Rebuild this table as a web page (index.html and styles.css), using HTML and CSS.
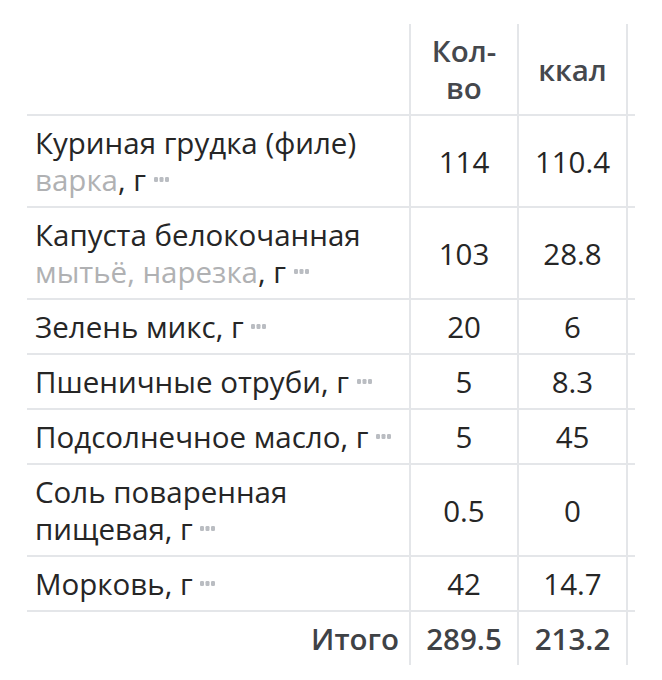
FILE: index.html
```html
<!DOCTYPE html>
<html lang="ru">
<head>
<meta charset="utf-8">
<link rel="stylesheet" href="styles.css">
</head>
<body>
<div class="wrap">
<table class="tbl">
  <colgroup>
    <col class="c-name"><col class="c-num"><col class="c-num2"><col class="c-pad">
  </colgroup>
  <thead>
    <tr>
      <th class="name"></th>
      <th class="num">Кол-<br>во</th>
      <th class="num">ккал</th>
      <th class="pad"></th>
    </tr>
  </thead>
  <tbody>
    <tr>
      <td class="name">Куриная грудка (филе)<br><span class="sub">варка</span>, г <svg class="dots" viewBox="0 0 15 5"><rect x="0" y="0" width="4" height="5" rx="1.2"/><rect x="5.5" y="0" width="4" height="5" rx="1.2"/><rect x="11" y="0" width="4" height="5" rx="1.2"/></svg></td>
      <td class="num">114</td><td class="num">110.4</td><td class="pad"></td>
    </tr>
    <tr>
      <td class="name">Капуста белокочанная<br><span class="sub">мытьё, нарезка</span>, г <svg class="dots" viewBox="0 0 15 5"><rect x="0" y="0" width="4" height="5" rx="1.2"/><rect x="5.5" y="0" width="4" height="5" rx="1.2"/><rect x="11" y="0" width="4" height="5" rx="1.2"/></svg></td>
      <td class="num">103</td><td class="num">28.8</td><td class="pad"></td>
    </tr>
    <tr>
      <td class="name">Зелень микс, г <svg class="dots" viewBox="0 0 15 5"><rect x="0" y="0" width="4" height="5" rx="1.2"/><rect x="5.5" y="0" width="4" height="5" rx="1.2"/><rect x="11" y="0" width="4" height="5" rx="1.2"/></svg></td>
      <td class="num">20</td><td class="num">6</td><td class="pad"></td>
    </tr>
    <tr>
      <td class="name">Пшеничные отруби, г <svg class="dots" viewBox="0 0 15 5"><rect x="0" y="0" width="4" height="5" rx="1.2"/><rect x="5.5" y="0" width="4" height="5" rx="1.2"/><rect x="11" y="0" width="4" height="5" rx="1.2"/></svg></td>
      <td class="num">5</td><td class="num">8.3</td><td class="pad"></td>
    </tr>
    <tr>
      <td class="name">Подсолнечное масло, г <svg class="dots" viewBox="0 0 15 5"><rect x="0" y="0" width="4" height="5" rx="1.2"/><rect x="5.5" y="0" width="4" height="5" rx="1.2"/><rect x="11" y="0" width="4" height="5" rx="1.2"/></svg></td>
      <td class="num">5</td><td class="num">45</td><td class="pad"></td>
    </tr>
    <tr>
      <td class="name">Соль поваренная<br>пищевая, г <svg class="dots" viewBox="0 0 15 5"><rect x="0" y="0" width="4" height="5" rx="1.2"/><rect x="5.5" y="0" width="4" height="5" rx="1.2"/><rect x="11" y="0" width="4" height="5" rx="1.2"/></svg></td>
      <td class="num">0.5</td><td class="num">0</td><td class="pad"></td>
    </tr>
    <tr>
      <td class="name">Морковь, г <svg class="dots" viewBox="0 0 15 5"><rect x="0" y="0" width="4" height="5" rx="1.2"/><rect x="5.5" y="0" width="4" height="5" rx="1.2"/><rect x="11" y="0" width="4" height="5" rx="1.2"/></svg></td>
      <td class="num">42</td><td class="num">14.7</td><td class="pad"></td>
    </tr>
  </tbody>
  <tfoot>
    <tr>
      <td class="name total-label">Итого</td>
      <td class="num">289.5</td><td class="num">213.2</td><td class="pad"></td>
    </tr>
  </tfoot>
</table>
</div>
</body>
</html>
```

FILE: styles.css
```css
html, body {
  margin: 0;
  padding: 0;
  background: #ffffff;
}
.wrap {
  padding: 24px 0 0 27px;
}
.tbl {
  border-collapse: collapse;
  table-layout: fixed;
  width: 608px;
  font-family: "Open Sans", "Noto Sans", sans-serif;
  font-size: 29.5px;
  line-height: 37px;
  color: #262626;
}
.c-name { width: 383px; }
.c-num { width: 108px; }
.c-num2 { width: 109px; }
.c-pad { width: 8px; }
.tbl th, .tbl td {
  padding: 8px 8px 8px 8px;
  vertical-align: middle;
  border-bottom: 2px solid #e4e6e9;
}
.tbl td.name {
  padding-right: 0;
  white-space: nowrap;
}
.tbl th.name, .tbl td.name,
.tbl th.num, .tbl td.num {
  border-right: 2px solid #e4e6e9;
}
.tbl th.pad, .tbl td.pad {
  padding: 0;
}
.tbl th {
  font-weight: 600;
  color: #45484d;
  text-align: center;
}
.tbl td.num { text-align: center; }
.tbl td.name { text-align: left; }
.sub { color: #b0b1b3; }
.dots {
  width: 15px;
  height: 5px;
  fill: #babdc2;
  vertical-align: 9px;
}
.tbl tfoot td {
  border-bottom: none;
  font-weight: 600;
  color: #3f4246;
}
.tbl tfoot td.total-label {
  text-align: right;
  padding-right: 10px;
}
```
